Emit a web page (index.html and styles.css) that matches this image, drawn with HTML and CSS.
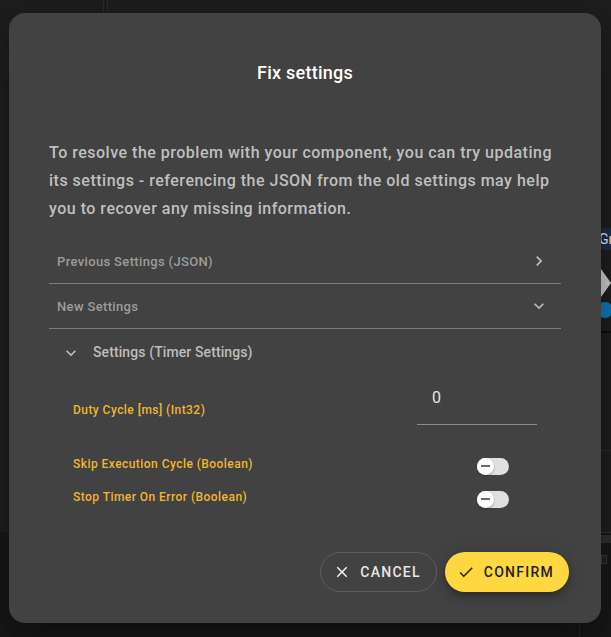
FILE: index.html
```html
<!DOCTYPE html>
<html lang="en">
<head>
<meta charset="utf-8">
<title>Fix settings</title>
<link rel="stylesheet" href="styles.css">
</head>
<body>
<div class="app">
  <div class="app-vline app-vline-a"></div>
  <div class="app-vline app-vline-b"></div>
  <div class="app-node">Gr</div>
  <div class="app-play"></div>
  <div class="app-dot"></div>
  <div class="app-hline app-hline-a"></div>
  <div class="app-hline app-hline-b"></div>
  <div class="app-footer">
    <div class="app-hline app-hline-c"></div>
    <div class="app-box app-box-a"></div>
    <div class="app-box app-box-b"></div>
    <div class="app-vline app-vline-c"></div>
  </div>
</div>

<div class="modal" role="dialog">
  <h2 class="modal-title">Fix settings</h2>
  <p class="modal-text">To resolve the problem with your component, you can try updating its settings - referencing the JSON from the old settings may help you to recover any missing information.</p>

  <div class="panel">
    <div class="panel-header">
      <span>Previous Settings (JSON)</span>
      <svg class="chev" viewBox="0 0 24 24"><path d="M10 6L8.59 7.41 13.17 12l-4.58 4.59L10 18l6-6z"/></svg>
    </div>
  </div>
  <div class="panel">
    <div class="panel-header">
      <span>New Settings</span>
      <svg class="chev" viewBox="0 0 24 24"><path d="M16.59 8.59L12 13.17 7.41 8.59 6 10l6 6 6-6z"/></svg>
    </div>
  </div>

  <div class="section">
    <div class="section-header">
      <svg class="chev chev-light" viewBox="0 0 24 24"><path d="M16.59 8.59L12 13.17 7.41 8.59 6 10l6 6 6-6z"/></svg>
      <span>Settings (Timer Settings)</span>
    </div>
    <div class="field-row field-row-input">
      <label class="field-label">Duty Cycle [ms] (Int32)</label>
      <div class="field-input">0</div>
    </div>
    <div class="field-row field-row-switch">
      <label class="field-label">Skip Execution Cycle (Boolean)</label>
      <div class="switch"><span class="switch-thumb"></span></div>
    </div>
    <div class="field-row field-row-switch">
      <label class="field-label">Stop Timer On Error (Boolean)</label>
      <div class="switch"><span class="switch-thumb"></span></div>
    </div>
  </div>

  <div class="actions">
    <button class="btn btn-cancel">
      <svg class="btn-icon" viewBox="0 0 24 24"><path d="M19 6.41L17.59 5 12 10.59 6.41 5 5 6.41 10.59 12 5 17.59 6.41 19 12 13.41 17.59 19 19 17.59 13.41 12z"/></svg>
      <span>CANCEL</span>
    </button>
    <button class="btn btn-confirm">
      <svg class="btn-icon" viewBox="0 0 24 24"><path d="M9 16.17L4.83 12l-1.42 1.41L9 19 21 7l-1.41-1.41z"/></svg>
      <span>CONFIRM</span>
    </button>
  </div>
</div>
</body>
</html>
```

FILE: styles.css
```css
* { box-sizing: border-box; }

html, body {
  margin: 0;
  padding: 0;
}

body {
  width: 611px;
  height: 637px;
  overflow: hidden;
  background: #1e1e1e;
  font-family: Roboto, "Liberation Sans", sans-serif;
  position: relative;
}

/* ---------- background application (behind the dialog) ---------- */
.app {
  position: absolute;
  inset: 0;
}

.app-vline {
  position: absolute;
  top: 0;
  bottom: 0;
  width: 1px;
  background: #2b2b2b;
}
.app-vline-a { left: 103px; }
.app-vline-b { left: 107px; }

.app-node {
  position: absolute;
  left: 598px;
  top: 228px;
  width: 13px;
  height: 22px;
  background: #1b2d47;
  color: #dfe6f0;
  font-size: 14px;
  line-height: 22px;
  padding-left: 1px;
  overflow: hidden;
  white-space: nowrap;
}

.app-play {
  position: absolute;
  left: 601px;
  top: 269px;
  width: 0;
  height: 0;
  border-top: 14px solid transparent;
  border-bottom: 14px solid transparent;
  border-left: 10px solid #c8c8c8;
}

.app-dot {
  position: absolute;
  left: 597px;
  top: 302px;
  width: 16px;
  height: 16px;
  border-radius: 50%;
  background: #0a78b8;
}

.app-hline {
  position: absolute;
  left: 600px;
  right: 0;
  height: 2px;
}
.app-hline-a { top: 331px; background: #0e0e0e; }
.app-hline-b { top: 450px; background: #2a2a2a; height: 1px; }
.app-hline-c { top: 0; background: #333333; height: 1px; }

.app-footer {
  position: absolute;
  left: 0;
  right: 0;
  top: 532px;
  bottom: 0;
  background: #181818;
}
.app-box {
  position: absolute;
  left: 601px;
  background: #2e2e2e;
}
.app-box-a { top: 3px; width: 10px; height: 8px; }
.app-box-b { top: 23px; width: 6px; height: 9px; border: 1px solid #3a3a3a; background: #222; }
.app-vline-c { left: 579px; top: 0; background: #262626; }

/* ---------- dialog ---------- */
.modal {
  position: absolute;
  left: 9px;
  top: 13px;
  width: 592px;
  height: 610px;
  background: #424242;
  border-radius: 16px;
  box-shadow: 0 11px 15px -7px rgba(0,0,0,.2), 0 24px 38px 3px rgba(0,0,0,.14), 0 9px 46px 8px rgba(0,0,0,.12);
  padding: 48px 40px 31px;
  display: flex;
  flex-direction: column;
}

.modal-title {
  margin: 0;
  text-align: center;
  color: #ffffff;
  font-size: 18px;
  font-weight: 500;
  line-height: 24px;
  letter-spacing: 0.25px;
}

.modal-text {
  margin: 54px 0 0;
  color: #bfbfbf;
  font-size: 16px;
  font-weight: 500;
  line-height: 28px;
  letter-spacing: 0.5px;
}

.panel {
  border-bottom: 1px solid #7c7c7c;
}
.panel:first-of-type { margin-top: 16px; }

.panel-header {
  height: 44px;
  display: flex;
  align-items: center;
  justify-content: space-between;
  padding: 0 12px 0 8px;
  color: #9c9c9c;
  font-size: 13px;
  font-weight: 500;
  letter-spacing: 0.35px;
}

.chev {
  width: 20px;
  height: 20px;
  fill: #bdbdbd;
  flex: none;
}

.section-header {
  height: 46px;
  display: flex;
  align-items: center;
  gap: 12px;
  padding-left: 12px;
  color: #bdbdbd;
  font-size: 14px;
  font-weight: 500;
  letter-spacing: 0.1px;
}
.section-header .chev { margin-top: 2px; }

.field-row {
  display: grid;
  grid-template-columns: 1fr 120px;
  padding: 0 24px;
}

.field-label {
  color: #f1b52f;
  font-size: 12px;
  font-weight: 500;
  line-height: 16px;
  letter-spacing: 0.45px;
}

.field-row-input {
  align-items: start;
  margin-bottom: 25px;
}
.field-row-input .field-label { margin-top: 27px; }

.field-input {
  padding: 11px 15px 14px;
  line-height: 24px;
  font-size: 16px;
  color: #e4e4e4;
  border-bottom: 1px solid #8a8a8a;
}

.field-row-switch {
  height: 33px;
  align-items: center;
}
.field-row-switch .field-label { padding-bottom: 6px; }

.switch {
  position: relative;
  margin-left: 60px;
  width: 32px;
  height: 17px;
  border-radius: 9px;
  background: #e0e0e0;
}
.switch-thumb {
  position: absolute;
  left: 0;
  top: 0;
  width: 17px;
  height: 17px;
  border-radius: 50%;
  background: #ffffff;
  box-shadow: 0 1px 2px rgba(0,0,0,.35);
}
.switch-thumb::after {
  content: "";
  position: absolute;
  left: 4px;
  top: 7px;
  width: 9px;
  height: 2px;
  background: #6a6a6a;
}

.actions {
  margin-top: auto;
  margin-right: -8px;
  display: flex;
  justify-content: flex-end;
  gap: 8px;
}

.btn {
  height: 40px;
  border-radius: 20px;
  display: flex;
  align-items: center;
  gap: 9px;
  padding: 0 15px 0 12px;
  font-family: Roboto, "Liberation Sans", sans-serif;
  font-size: 14px;
  font-weight: 500;
  letter-spacing: 1.25px;
  cursor: pointer;
}

.btn-icon {
  width: 18px;
  height: 18px;
  flex: none;
}

.btn-cancel {
  background: transparent;
  border: 1px solid #5e5e5e;
  color: #e6e6e6;
}
.btn-cancel .btn-icon { fill: #f2f2f2; }

.btn-confirm {
  background: #ffd740;
  border: none;
  color: #1e1e1e;
  box-shadow: 0 3px 5px -1px rgba(0,0,0,.2), 0 6px 10px 0 rgba(0,0,0,.14), 0 1px 18px 0 rgba(0,0,0,.12);
}
.btn-confirm .btn-icon { fill: #1e1e1e; }
```
